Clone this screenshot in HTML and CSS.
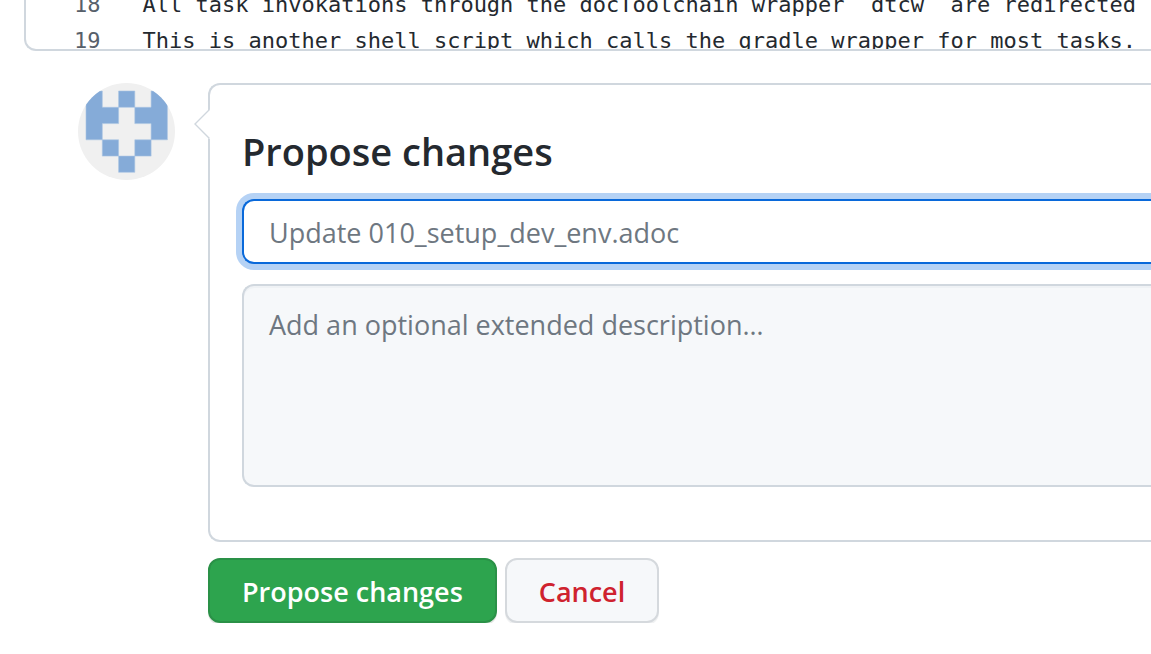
FILE: index.html
```
<!DOCTYPE html>
<html lang="en">
<head>
<meta charset="utf-8">
<title>Propose changes</title>
<link rel="stylesheet" href="styles.css">
</head>
<body>
<main class="page">
  <section class="editor" aria-label="File contents">
    <div class="line"><span class="line-number">18</span><code class="line-code">All task invokations through the docToolchain wrapper `dtcw` are redirected</code></div>
    <div class="line"><span class="line-number">19</span><code class="line-code">This is another shell script which calls the gradle wrapper for most tasks.</code></div>
  </section>
  <form class="commit">
    <svg class="avatar" viewBox="0 0 97 97" role="img" aria-label="Avatar">
      <defs><clipPath id="round"><circle cx="48.5" cy="48.5" r="48.5"/></clipPath></defs>
      <g clip-path="url(#round)">
        <path fill="#f0f0f0" d="M0 0h97v97H0z"/>
        <path fill="#85abd8" stroke="#a9c4e3" stroke-width=".6" d="M8 8h16.3v16.3h16.3v16.3H24.3v16.2H8zM40.6 8h16.2v16.3H40.6zM73.1 8h16.3v48.8H73.1V40.6H56.8V24.3h16.3zM24.3 56.8h16.3v16.3H24.3zM56.8 56.8h16.3v16.3H56.8zM40.6 73.1h16.2v16.2H40.6z"/>
      </g>
    </svg>
    <div class="commit-main">
      <div class="card">
        <svg class="caret" viewBox="0 0 17 30" aria-hidden="true"><path fill="#fff" d="M17 0v30h-2L1 15 15 1z"/><path fill="none" stroke="#d0d7de" stroke-width="1.4" d="M15.500 0.500 1 15 15.500 29.500"/></svg>
        <h1 class="title">Propose changes</h1>
        <input class="field summary" type="text" aria-label="Commit summary" placeholder="Update 010_setup_dev_env.adoc">
        <textarea class="field description" aria-label="Extended description" placeholder="Add an optional extended description…"></textarea>
      </div>
      <div class="actions">
        <button class="button primary" type="submit">Propose changes</button>
        <button class="button danger" type="button">Cancel</button>
      </div>
    </div>
  </form>
</main>
</body>
</html>
```
FILE: styles.css
```
* {
  box-sizing: border-box;
}

body {
  margin: 0;
  background: #fff;
  color: #24292f;
  font-family: "Segoe UI", "Open Sans", "Noto Sans", sans-serif;
  font-size: 27px;
  overflow-x: hidden;
}

.page {
  padding-left: 24px;
}

/* The editor shows the tail of the file: older lines run off its top. */
.editor {
  display: flex;
  flex-direction: column;
  justify-content: flex-end;
  height: 51px;
  padding-left: 48px;
  border: solid #d0d7de;
  border-width: 0 0 2px 2px;
  border-radius: 0 0 0 12px;
  overflow: hidden;
}

.line {
  display: flex;
  flex: none;
  gap: 42px;
  font-family: Consolas, "DejaVu Sans Mono", monospace;
  font-size: 22px;
  line-height: 36px;
  white-space: pre;
}

.line:last-child {
  margin-bottom: -10px;
}

.line-number {
  color: #57606a;
}

.line-code {
  font: inherit;
}

.commit {
  display: flex;
  align-items: flex-start;
  gap: 33px;
  margin-top: 32px;
  padding-left: 54px;
}

.avatar {
  flex: none;
  width: 97px;
  height: 97px;
}

.commit-main {
  flex: 1;
  min-width: 0;
}

.card {
  position: relative;
  display: flex;
  flex-direction: column;
  padding: 40px 0 53px 32px;
  border: solid #d0d7de;
  border-width: 2px 0 2px 2px;
  border-radius: 12px 0 0 12px;
}

.caret {
  position: absolute;
  top: 24px;
  left: -16px;
  width: 17px;
  height: 30px;
}

.title {
  margin: 0 0 22px;
  font-size: 38px;
  font-weight: 600;
  line-height: 52px;
}

.field {
  width: 100%;
  border: solid #d0d7de;
  border-width: 2px 0 2px 2px;
  border-radius: 12px 0 0 12px;
  outline: none;
  color: inherit;
  font: inherit;
}

.field::placeholder {
  color: #6e7781;
  opacity: 1;
}

.summary {
  height: 65px;
  padding: 10px 0 8px 25px;
  border-color: #0969da;
  background: #fff;
  box-shadow: 0 0 0 6px #b5d2f5;
}

.description {
  height: 203px;
  margin-top: 20px;
  padding: 19px 0 16px 25px;
  background: #f6f8fa;
  box-shadow: inset 0 2px 0 #eff2f5;
  line-height: 40px;
  resize: none;
}

.actions {
  display: flex;
  gap: 8px;
  margin-top: 16px;
}

.button {
  height: 65px;
  padding: 2px 32px 0;
  border: 2px solid #d5d9dd;
  border-radius: 12px;
  background: #f6f8fa;
  box-shadow: 0 2px 0 #f0f1f2;
  font: inherit;
  font-weight: 600;
}

.primary {
  border-color: #2a9147;
  background: #2da44e;
  box-shadow: 0 2px 0 #e4e6e4;
  color: #fff;
}

.danger {
  color: #cf222e;
}
```
